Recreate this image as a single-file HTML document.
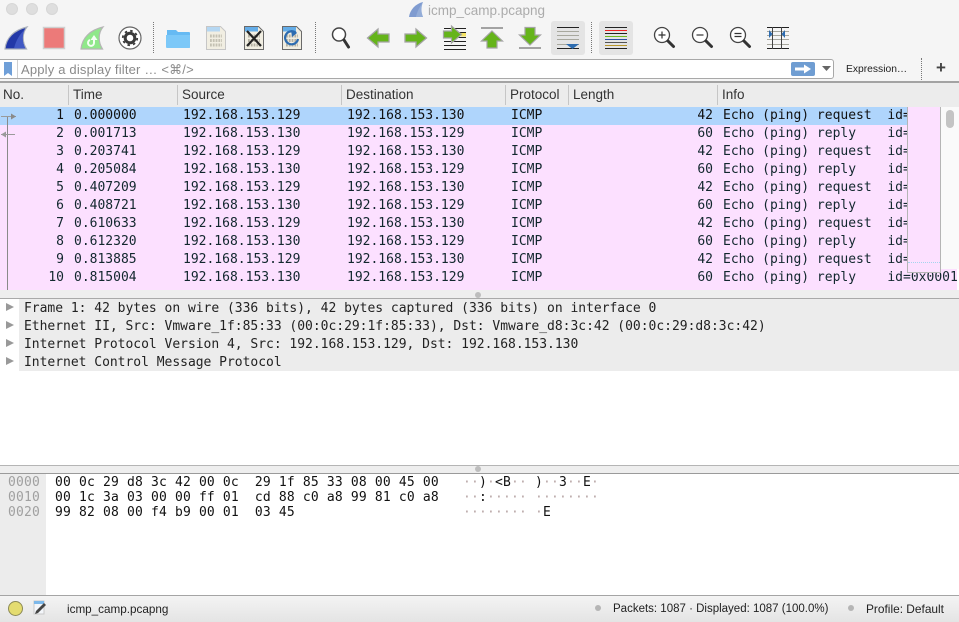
<!DOCTYPE html>
<html><head><meta charset="utf-8"><style>
*{box-sizing:border-box}
html,body{margin:0;padding:0;width:959px;height:622px;overflow:hidden;background:#fff}
body{position:relative;font-family:"Liberation Sans",sans-serif;color:#222}
.a{position:absolute;white-space:pre}
.m{font-family:"DejaVu Sans Mono","Liberation Mono",monospace;font-size:13px;line-height:18px}
.r{position:absolute;left:0;width:957px;height:18px;background:#fce0ff;color:#12272e;overflow:hidden}
.r span{position:absolute;top:0;white-space:pre}
.n{right:893px}.t{left:74px}.s{left:183px}.d{left:347px}.p{left:511px}.l{right:244px}.i{left:723px}
.h{position:absolute;top:86px;font-size:13.5px;line-height:18px;color:#333}
.v{position:absolute;top:85px;width:1px;height:20px;background:#c6c6c6}
.dot{position:absolute;width:0;border-left:1px dotted #777}
.x{color:#111}.g{color:#b9a7a7}
.hx{position:absolute;font-family:"DejaVu Sans Mono","Liberation Mono",monospace;font-size:13px;line-height:15px;letter-spacing:.17px;white-space:pre;color:#111}
.dr{position:absolute;left:24px;font-family:"DejaVu Sans Mono","Liberation Mono",monospace;font-size:13px;line-height:18px;letter-spacing:-.02px;white-space:pre;color:#222}
.tri{position:absolute;left:6px;width:0;height:0;border-left:8px solid #999;border-top:4.5px solid transparent;border-bottom:4.5px solid transparent}
</style></head><body>

<!-- title + toolbar background -->
<div class="a" style="left:0;top:0;width:959px;height:83px;background:#f5f5f5"></div>
<div class="a" style="left:6px;top:3px;width:12px;height:12px;border-radius:50%;background:#dedede;border:1px solid #d6d6d6"></div>
<div class="a" style="left:26px;top:3px;width:12px;height:12px;border-radius:50%;background:#dedede;border:1px solid #d6d6d6"></div>
<div class="a" style="left:46px;top:3px;width:12px;height:12px;border-radius:50%;background:#dedede;border:1px solid #d6d6d6"></div>
<svg class="a" style="left:408px;top:1px" width="17" height="17" viewBox="0 0 17 17"><path d="M1 16C2 9 7 3 15 1C12 6 13 11 15 16Z" fill="#7f9bd0"/><path d="M8 16C9 11 11 7 15 1C13 6 13 11 15 16Z" fill="#94add8"/></svg>
<div class="a" style="left:428px;top:2px;font-size:13.5px;line-height:17px;color:#acacac">icmp_camp.pcapng</div>

<!-- toolbar icons -->
<svg class="a" style="left:0;top:20px" width="959" height="38" viewBox="0 20 959 38">
 <!-- fin -->
 <path d="M5 49C6 38 14 30 27 27C22 33 22 42 26.500 49Z" fill="#2238a8" stroke="#aab0bc" stroke-width="1.200"/>
 <path d="M14 48.500C16 40 20 34 25 29C22 35 22 42 25.500 48.500Z" fill="#4058c4"/>
 <!-- stop -->
 <rect x="43.500" y="27.500" width="21" height="21" fill="#ec7a79" stroke="#cfcfcf" stroke-width="1.500"/>
 <!-- restart fin -->
 <path d="M81 49C82 38 90 30 103 27C98 33 98 42 102.500 49Z" fill="#8fe88a" stroke="#b5b5b5" stroke-width="1.200"/>
 <path d="M94 37v6a3 3 0 1 1-4-3" stroke="#f4fff4" stroke-width="2" fill="none"/><path d="M90.500 40l3.500-5 3.500 5z" fill="#f4fff4"/>
 <!-- gear -->
 <circle cx="130" cy="38" r="11" fill="#fff" stroke="#666" stroke-width="1.200"/>
 <circle cx="130" cy="38" r="4.800" fill="none" stroke="#3a3a3a" stroke-width="3"/>
 <circle cx="130" cy="38" r="7.200" fill="none" stroke="#3a3a3a" stroke-width="1.800" stroke-dasharray="2.500 3.150"/>
 <!-- folder -->
 <path d="M167 30h9l2 2h11a1 1 0 0 1 1 1v14a1 1 0 0 1-1 1h-21a1 1 0 0 1-1-1z" fill="#66baf3"/>
 <path d="M166 35h24v12a1 1 0 0 1-1 1h-22a1 1 0 0 1-1-1z" fill="#7cc8f8"/>
 <!-- file 1 -->
 <path d="M206.500 26.500h14l5 5v18h-19z" fill="#f1eee2" stroke="#c6c6c6"/>
 <path d="M207 27h13v4.500h-13z" fill="#b5d7f2"/>
 <g stroke="#c4c1b3" stroke-width="3" stroke-dasharray="1.800 1"><path d="M210 36h12M210 40.500h12M210 45h12"/></g>
 <!-- file 2 close -->
 <path d="M244.500 26.500h14l5 5v18h-19z" fill="#f1eee2" stroke="#6a6a6a"/>
 <path d="M245 27h13v4.500h-13z" fill="#64ade8"/>
 <g stroke="#b3b0a2" stroke-width="3" stroke-dasharray="1.800 1"><path d="M248 36h12M248 40.500h12M248 45h12"/></g>
 <path d="M247 31l14 15M261 31l-14 15" stroke="#222" stroke-width="2.200"/>
 <!-- file 3 reload -->
 <path d="M282.500 26.500h14l5 5v18h-19z" fill="#f1eee2" stroke="#6a6a6a"/>
 <path d="M283 27h13v4.500h-13z" fill="#64ade8"/>
 <g stroke="#b3b0a2" stroke-width="3" stroke-dasharray="1.800 1"><path d="M286 36h12M286 40.500h12M286 45h12"/></g>
 <path d="M296 33a6.500 6.500 0 1 0 2 6" fill="none" stroke="#2d6cb0" stroke-width="2.200"/><path d="M291 30l6 3-5 4z" fill="#2d6cb0"/>
 <!-- find -->
 <circle cx="339" cy="34.500" r="6.500" fill="#fff" stroke="#444" stroke-width="1.500"/>
 <path d="M344 40l4.500 7" stroke="#333" stroke-width="3" stroke-linecap="round"/>
 <!-- back -->
 <path d="M367.500 38l10.500-9v5h11v8h-11v5z" fill="#65b41a" stroke="#a4a4a4" stroke-width="1.300"/>
 <!-- forward -->
 <path d="M426.500 38l-10.500-9v5h-11v8h11v5z" fill="#65b41a" stroke="#a4a4a4" stroke-width="1.300"/>
 <!-- goto -->
 <g stroke="#222" stroke-width="1"><path d="M444 28.500h22M444 32.500h22M444 37.500h22M444 41.500h22M444 45.500h22M444 49.500h22"/></g>
 <rect x="461" y="33" width="5" height="3.500" fill="#f5e463"/>
 <path d="M443.500 31h8v-5l10 8.500-10 8.500v-5h-8z" fill="#65b41a" stroke="#a4a4a4" stroke-width="1.200"/>
 <!-- top -->
 <path d="M481 28h22" stroke="#888" stroke-width="1.500"/>
 <path d="M492 31l10.500 10h-5.500v7h-10v-7h-5.500z" fill="#65b41a" stroke="#a4a4a4" stroke-width="1.200"/>
 <!-- bottom -->
 <path d="M519 48h22" stroke="#888" stroke-width="1.500"/>
 <path d="M530 45l10.500-10h-5.500v-7.500h-10v7.500h-5.500z" fill="#65b41a" stroke="#a4a4a4" stroke-width="1.200"/>
 <!-- autoscroll -->
 <rect x="551" y="21" width="34" height="34" rx="3" fill="#e4e4e4"/>
 <path d="M557 27.500h22M557 48.500h22" stroke="#222"/>
 <path d="M557 31.500h22M557 35.500h22M557 39.500h22M557 44.500h22" stroke="#a8a89e"/>
 <path d="M566 44h13l-6.500 5z" fill="#2d6cb0"/>
 <!-- colorize -->
 <rect x="599" y="21" width="34" height="34" rx="3" fill="#e4e4e4"/>
 <path d="M605 27.500h22" stroke="#222"/><path d="M605 30.500h22" stroke="#e22"/><path d="M605 33.500h22" stroke="#222"/>
 <path d="M605 36.500h22" stroke="#6cb81c"/><path d="M605 39.500h22" stroke="#2d4fa0"/><path d="M605 42.500h22" stroke="#555"/>
 <path d="M605 45.500h22" stroke="#b8962a"/><path d="M605 48.500h22" stroke="#222"/>
 <!-- zoom in -->
 <circle cx="662" cy="35" r="7.500" fill="#fff" stroke="#444" stroke-width="1.300"/>
 <path d="M668 41l5.500 5.500" stroke="#333" stroke-width="3" stroke-linecap="round"/>
 <path d="M658.500 35h7M662 31.500v7" stroke="#333" stroke-width="1.200"/>
 <!-- zoom out -->
 <circle cx="700" cy="35" r="7.500" fill="#fff" stroke="#444" stroke-width="1.300"/>
 <path d="M706 41l5.500 5.500" stroke="#333" stroke-width="3" stroke-linecap="round"/>
 <path d="M696.500 35h7" stroke="#333" stroke-width="1.200"/>
 <!-- zoom reset -->
 <circle cx="738" cy="35" r="7.500" fill="#fff" stroke="#444" stroke-width="1.300"/>
 <path d="M744 41l5.500 5.500" stroke="#333" stroke-width="3" stroke-linecap="round"/>
 <path d="M734.500 33.500h7M734.500 36.500h7" stroke="#333" stroke-width="1.200"/>
 <!-- resize columns -->
 <path d="M767 27.500h22M767 48.500h22" stroke="#222"/>
 <path d="M767 31.500h22M767 35.500h22M767 39.500h22M767 44.500h22" stroke="#a8a89e"/>
 <path d="M772.500 27v22M781.500 27v22" stroke="#444"/>
 <path d="M769 30l3.500 4-3.500 4zM785 30l-3.500 4 3.500 4z" fill="#2d6cb0"/>
</svg>
<div class="dot" style="left:153px;top:22px;height:31px"></div>
<div class="dot" style="left:315px;top:22px;height:31px"></div>
<div class="dot" style="left:591px;top:22px;height:31px"></div>
<div class="dot" style="left:921px;top:58px;height:22px"></div>

<!-- filter bar -->
<div class="a" style="left:-3px;top:59px;width:837px;height:20px;background:#fff;border:1px solid #a8a8a8;border-radius:3px"></div>
<div class="a" style="left:17px;top:60px;width:1px;height:18px;background:#cfcfcf"></div>
<svg class="a" style="left:4px;top:62px" width="9" height="14"><path d="M0 0h8v14l-4-3-4 3z" fill="#6f9fd8"/></svg>
<div class="a" style="left:21px;top:60px;font-size:13px;line-height:19px;color:#8a8a8a;letter-spacing:.18px">Apply a display filter … &lt;⌘/&gt;</div>
<svg class="a" style="left:791px;top:62px" width="24" height="14"><rect width="24" height="14" rx="2" fill="#6f9dd2"/><path d="M4 5.500h9V2.500l7 4.500-7 4.500v-3H4z" fill="#fff"/></svg>
<svg class="a" style="left:822px;top:66px" width="9" height="6"><path d="M0 0h9L4.500 5z" fill="#666"/></svg>
<div class="a" style="left:846px;top:62px;font-size:10.3px;line-height:15px;color:#222">Expression…</div>
<div class="a" style="left:933px;top:58px;font-size:17px;line-height:20px;font-weight:bold;color:#444;width:16px;text-align:center">+</div>
<div class="a" style="left:0;top:81px;width:959px;height:2px;background:#a3a3a3"></div>

<!-- header -->
<div class="a" style="left:0;top:83px;width:959px;height:24px;background:#ececec"></div>
<div class="h" style="left:3px">No.</div><div class="v" style="left:68px"></div>
<div class="h" style="left:73px">Time</div><div class="v" style="left:177px"></div>
<div class="h" style="left:182px">Source</div><div class="v" style="left:341px"></div>
<div class="h" style="left:346px">Destination</div><div class="v" style="left:505px"></div>
<div class="h" style="left:510px">Protocol</div><div class="v" style="left:568px"></div>
<div class="h" style="left:573px">Length</div><div class="v" style="left:717px"></div>
<div class="h" style="left:722px">Info</div>

<!-- packet list -->
<div class="a" style="left:0;top:107px;width:959px;height:184px;background:#fff;overflow:hidden">
<div class="m" style="position:absolute;left:0;top:0;width:959px;height:183px;overflow:hidden">
<div class="r" style="top:0;background:#afd5fc;color:#111"><span class="n">1</span><span class="t">0.000000</span><span class="s">192.168.153.129</span><span class="d">192.168.153.130</span><span class="p">ICMP</span><span class="l">42</span><span class="i">Echo (ping) request  id=0x0001</span></div>
<div class="r" style="top:18px"><span class="n">2</span><span class="t">0.001713</span><span class="s">192.168.153.130</span><span class="d">192.168.153.129</span><span class="p">ICMP</span><span class="l">60</span><span class="i">Echo (ping) reply    id=0x0001</span></div>
<div class="r" style="top:36px"><span class="n">3</span><span class="t">0.203741</span><span class="s">192.168.153.129</span><span class="d">192.168.153.130</span><span class="p">ICMP</span><span class="l">42</span><span class="i">Echo (ping) request  id=0x0001</span></div>
<div class="r" style="top:54px"><span class="n">4</span><span class="t">0.205084</span><span class="s">192.168.153.130</span><span class="d">192.168.153.129</span><span class="p">ICMP</span><span class="l">60</span><span class="i">Echo (ping) reply    id=0x0001</span></div>
<div class="r" style="top:72px"><span class="n">5</span><span class="t">0.407209</span><span class="s">192.168.153.129</span><span class="d">192.168.153.130</span><span class="p">ICMP</span><span class="l">42</span><span class="i">Echo (ping) request  id=0x0001</span></div>
<div class="r" style="top:90px"><span class="n">6</span><span class="t">0.408721</span><span class="s">192.168.153.130</span><span class="d">192.168.153.129</span><span class="p">ICMP</span><span class="l">60</span><span class="i">Echo (ping) reply    id=0x0001</span></div>
<div class="r" style="top:108px"><span class="n">7</span><span class="t">0.610633</span><span class="s">192.168.153.129</span><span class="d">192.168.153.130</span><span class="p">ICMP</span><span class="l">42</span><span class="i">Echo (ping) request  id=0x0001</span></div>
<div class="r" style="top:126px"><span class="n">8</span><span class="t">0.612320</span><span class="s">192.168.153.130</span><span class="d">192.168.153.129</span><span class="p">ICMP</span><span class="l">60</span><span class="i">Echo (ping) reply    id=0x0001</span></div>
<div class="r" style="top:144px"><span class="n">9</span><span class="t">0.813885</span><span class="s">192.168.153.129</span><span class="d">192.168.153.130</span><span class="p">ICMP</span><span class="l">42</span><span class="i">Echo (ping) request  id=0x0001</span></div>
<div class="r" style="top:162px"><span class="n">10</span><span class="t">0.815004</span><span class="s">192.168.153.130</span><span class="d">192.168.153.129</span><span class="p">ICMP</span><span class="l">60</span><span class="i">Echo (ping) reply    id=0x0001</span></div>
<div class="r" style="top:180px;height:3px"></div>
</div>
<!-- overlay box -->
<div class="a" style="left:907px;top:0;width:34px;height:166px;background:#fce0ff;border-left:1px solid #b5b5b5;border-right:1px solid #b5b5b5;border-bottom:1px solid #b5b5b5"></div>
<div class="a" style="left:908px;top:155px;width:32px;height:0;border-top:1px dotted #a5d5ee"></div>
<div class="a" style="left:941px;top:0;width:18px;height:162px;background:#fafafa"></div>
<div class="a" style="left:946px;top:3px;width:8px;height:18px;border-radius:4px;background:#c4c4c4"></div>
<svg class="a" style="left:0;top:0" width="20" height="184">
 <path d="M7.500 9v175" stroke="#8a8a8a"/>
 <path d="M1 9.500h15" stroke="#9a9a9a"/><path d="M11 6.500l5 3-5 3z" fill="#8a8a8a"/>
 <path d="M1 27.500h14" stroke="#9a9a9a"/><path d="M6 24.500l-5 3 5 3z" fill="#9a9a9a"/>
</svg>
</div>

<!-- splitter 1 -->
<div class="a" style="left:0;top:290px;width:959px;height:9px;background:#eeeeee;border-bottom:1px solid #a9a9a9"></div>
<div class="a" style="left:475px;top:292px;width:6px;height:6px;border-radius:50%;background:#bdbdbd"></div>

<!-- details -->
<div class="a" style="left:19px;top:299px;width:940px;height:72px;background:#ececec"></div>
<div class="tri" style="top:303px"></div><div class="tri" style="top:321px"></div><div class="tri" style="top:339px"></div><div class="tri" style="top:357px"></div>
<div class="dr" style="top:300px">Frame 1: 42 bytes on wire (336 bits), 42 bytes captured (336 bits) on interface 0</div>
<div class="dr" style="top:318px">Ethernet II, Src: Vmware_1f:85:33 (00:0c:29:1f:85:33), Dst: Vmware_d8:3c:42 (00:0c:29:d8:3c:42)</div>
<div class="dr" style="top:336px">Internet Protocol Version 4, Src: 192.168.153.129, Dst: 192.168.153.130</div>
<div class="dr" style="top:354px">Internet Control Message Protocol</div>

<!-- splitter 2 -->
<div class="a" style="left:0;top:465px;width:959px;height:9px;background:#eeeeee;border-top:1px solid #b5b5b5;border-bottom:1px solid #9a9a9a"></div>
<div class="a" style="left:475px;top:466px;width:6px;height:6px;border-radius:50%;background:#bdbdbd"></div>

<!-- hex -->
<div class="a" style="left:0;top:474px;width:46px;height:122px;background:#ececec"></div>
<div class="hx" style="left:8px;top:475px;color:#a0a0a0">0000
0010
0020</div>
<div class="hx" style="left:55px;top:475px">00 0c 29 d8 3c 42 00 0c  29 1f 85 33 08 00 45 00
00 1c 3a 03 00 00 ff 01  cd 88 c0 a8 99 81 c0 a8
99 82 08 00 f4 b9 00 01  03 45</div>
<div class="hx" style="left:463px;top:475px"><span class="g">··</span>)<span class="g">·</span>&lt;B<span class="g">··</span> )<span class="g">··</span>3<span class="g">··</span>E<span class="g">·</span>
<span class="g">··</span>:<span class="g">·····</span> <span class="g">········</span>
<span class="g">········</span> <span class="g">·</span>E</div>

<!-- status bar -->
<div class="a" style="left:0;top:595px;width:959px;height:27px;background:linear-gradient(#f4f4f4,#e4e4e4);border-top:1.500px solid #a5a5a5"></div>
<div class="a" style="left:8px;top:601px;width:15px;height:15px;border-radius:50%;background:#e4dc70;border:1px solid #8c8a55"></div>
<svg class="a" style="left:33px;top:600px" width="15" height="15"><path d="M1 1h10v13H1z" fill="#f3f6fa" stroke="#c8c8c8"/><path d="M1 1h10v3H1z" fill="#7cb8ea"/><path d="M3 11l8-8 2 2-8 8-3 1z" fill="#444"/></svg>
<div class="a" style="left:67px;top:602px;font-size:11.7px;line-height:15px;color:#222">icmp_camp.pcapng</div>
<div class="a" style="left:595px;top:605px;width:6px;height:6px;border-radius:50%;background:#b5b5b5"></div>
<div class="a" style="left:613px;top:602px;font-size:11.5px;line-height:15px;color:#222">Packets: 1087 · Displayed: 1087 (100.0%)</div>
<div class="a" style="left:848px;top:605px;width:6px;height:6px;border-radius:50%;background:#b5b5b5"></div>
<div class="a" style="left:866px;top:602px;font-size:11.9px;line-height:15px;color:#222">Profile: Default</div>
</body></html>
